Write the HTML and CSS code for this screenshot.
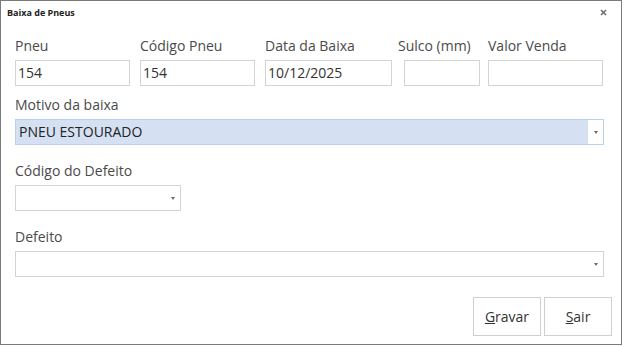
FILE: index.html
```html
<!DOCTYPE html>
<html lang="pt-BR">
<head>
  <meta charset="UTF-8">
  <title>Baixa de Pneus</title>
  <link rel="stylesheet" href="styles.css">
</head>
<body>
  <div class="window">
    <div class="titlebar">
      <span class="title">Baixa de Pneus</span>
      <svg class="close" width="7" height="7" viewBox="0 0 7 7">
        <path d="M1 1 L6 6 M6 1 L1 6" stroke="#6d6d6d" stroke-width="1.6"/>
      </svg>
    </div>

    <div class="content">
      <div class="row">
        <div class="field f-pneu">
          <label>Pneu</label>
          <div class="input">154</div>
        </div>
        <div class="field f-codigo">
          <label>Código Pneu</label>
          <div class="input">154</div>
        </div>
        <div class="field f-data">
          <label>Data da Baixa</label>
          <div class="input">10/12/2025</div>
        </div>
        <div class="field f-sulco">
          <label>Sulco (mm)</label>
          <div class="input"></div>
        </div>
        <div class="field f-valor">
          <label>Valor Venda</label>
          <div class="input"></div>
        </div>
      </div>

      <div class="field f-motivo">
        <label>Motivo da baixa</label>
        <div class="combo focused">
          <span class="combo-text">PNEU ESTOURADO</span>
          <span class="combo-btn"><span class="arrow"></span></span>
        </div>
      </div>

      <div class="field f-cod-defeito">
        <label>Código do Defeito</label>
        <div class="combo small">
          <span class="combo-text"></span>
          <span class="combo-btn"><span class="arrow"></span></span>
        </div>
      </div>

      <div class="field f-defeito">
        <label>Defeito</label>
        <div class="combo">
          <span class="combo-text"></span>
          <span class="combo-btn"><span class="arrow"></span></span>
        </div>
      </div>

      <div class="buttons">
        <button><u>G</u>ravar</button>
        <button><u>S</u>air</button>
      </div>
    </div>
  </div>
</body>
</html>
```

FILE: styles.css
```css
body {
  margin: 0;
  background: #fff;
  font-family: "Open Sans", "Noto Sans", sans-serif;
  color: #333;
}
.window {
  box-sizing: border-box;
  width: 622px;
  height: 345px;
  border: 1px solid #7a7a7a;
  background: #fff;
}
.titlebar {
  display: flex;
  justify-content: space-between;
  align-items: center;
  height: 22px;
  padding: 0 14px 0 6px;
}
.title {
  font-size: 9px;
  font-weight: bold;
  color: #222;
}
.close {
  display: block;
}
.content {
  padding: 14px 0 0 14px;
}
.row {
  display: flex;
}
label {
  display: block;
  font-size: 14px;
  line-height: 18px;
  color: #4a4a4a;
  margin-bottom: 5px;
}
.input {
  box-sizing: border-box;
  height: 26px;
  border: 1px solid #d4d4d4;
  font-size: 14px;
  line-height: 24px;
  padding-left: 2px;
  color: #333;
}
.f-pneu { width: 115px; margin-right: 10px; }
.f-codigo { width: 115px; margin-right: 10px; }
.f-data { width: 127px; margin-right: 6px; }
.f-sulco { width: 81px; margin-right: 9px; }
.f-sulco .input { margin-left: 6px; width: 76px; }
.f-valor { width: 115px; }

.f-motivo { margin-top: 10px; width: 589px; }
.f-cod-defeito { margin-top: 17px; }
.f-defeito { margin-top: 17px; width: 589px; }

.combo {
  box-sizing: border-box;
  display: flex;
  height: 26px;
  border: 1px solid #d4d4d4;
  background: #fff;
}
.combo.small { width: 166px; }
.combo-text {
  flex: 1;
  font-size: 14px;
  line-height: 24px;
  padding-left: 3px;
  color: #333;
}
.combo-btn {
  width: 15px;
  display: flex;
  align-items: center;
  justify-content: center;
  background: #fff;
}
.arrow {
  width: 0;
  height: 0;
  border-left: 2.5px solid transparent;
  border-right: 2.5px solid transparent;
  border-top: 3px solid #6a6a6a;
}
.combo.focused {
  border-color: #b7d2ee;
  background: #d5e1f3;
}
.combo.focused .combo-text {
  color: #222;
}

.buttons {
  display: flex;
  justify-content: flex-end;
  gap: 3px;
  margin-top: 20px;
  padding-right: 9px;
}
button {
  width: 68px;
  height: 39px;
  border: 1px solid #cfcfcf;
  background: #fff;
  font-family: "Open Sans", "Noto Sans", sans-serif;
  font-size: 14px;
  color: #333;
  padding: 0;
}
```
